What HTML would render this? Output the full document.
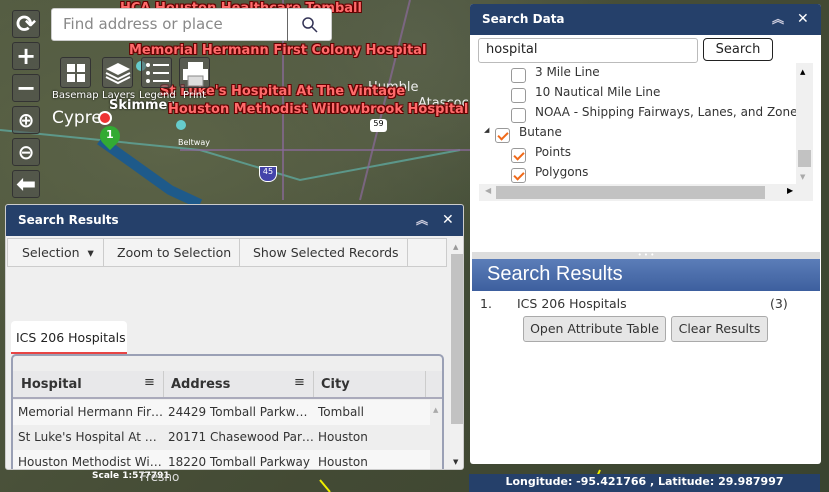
<!DOCTYPE html>
<html><head><meta charset="utf-8"><style>
*{box-sizing:border-box;margin:0;padding:0}
body{width:829px;height:492px;overflow:hidden;position:relative;font-family:"DejaVu Sans","Liberation Sans",sans-serif;background:#4b5238}
.map{position:absolute;inset:0;background:
radial-gradient(ellipse at 20% 30%,#5c6448 0,transparent 40%),
radial-gradient(ellipse at 70% 60%,#3f4a35 0,transparent 45%),
radial-gradient(ellipse at 50% 10%,#58604a 0,transparent 35%),
linear-gradient(135deg,#545c42,#434a34 60%,#3a4430)}
.abs{position:absolute}
.tb{position:absolute;left:12px;width:28px;height:28px;background:rgba(80,80,80,.55);border:1px solid #333;border-radius:3px;color:#fff;font-size:24px;font-weight:bold;text-align:center;line-height:26px}
.lbl{position:absolute;color:#ff6b6b;font-weight:bold;font-size:13px;font-family:"DejaVu Sans",sans-serif;text-shadow:1px 1px 0 #600,-1px -1px 0 #600,1px -1px 0 #600,-1px 1px 0 #600;white-space:nowrap}
.wid{position:absolute;top:57px;width:31px;height:31px;background:rgba(90,90,90,.6);border:1px solid #333;border-radius:3px}
.wl{position:absolute;top:90px;color:#fff;font-size:10px;text-shadow:0 0 2px #000}
.hdr{background:#25406a;color:#fff;font-weight:bold;font-size:12px;height:31px;line-height:31px;padding-left:12px;position:relative}
.hdr .ic{position:absolute;top:0;font-size:12px;color:#ccd}
.cb{position:absolute;width:15px;height:15px;border:1px solid #999;border-radius:3px;background:#fff}
.cb.on::after{content:"";position:absolute;left:4px;top:1px;width:4px;height:8px;border:solid #f06a1a;border-width:0 2px 2px 0;transform:rotate(45deg)}
.tt{position:absolute;font-size:12px;color:#333}
.btn{position:absolute;background:#e6e6e6;border:1px solid #aaa;border-radius:3px;font-size:12.5px;color:#333;text-align:center}
</style></head><body>
<div class="map"></div>
<svg class="abs" style="left:0;top:0" width="829" height="492">
<path d="M0 130 L200 150 L300 180 L460 150" stroke="#5fb0a8" stroke-width="2" fill="none" opacity=".7"/>
<path d="M180 150 L380 150 L470 150" stroke="#8a6a9a" stroke-width="2" fill="none" opacity=".7"/>
<path d="M283 0 L283 200" stroke="#8a6a9a" stroke-width="2" fill="none" opacity=".7"/>
<path d="M410 0 L360 200" stroke="#8a6a9a" stroke-width="2" fill="none" opacity=".7"/>
<path d="M100 140 L170 190 L200 204" stroke="#1e5a8a" stroke-width="10" fill="none"/>
<circle cx="181" cy="125" r="5" fill="#6cc"/>
<circle cx="141" cy="66" r="5" fill="#6cc"/>
<path d="M320 480 L330 492 M600 470 L590 492" stroke="#ee0" stroke-width="2"/>
</svg>
<div class="abs" style="left:52px;top:108px;color:#fff;font-size:17px">Cypre</div>
<div class="abs" style="left:109px;top:98px;color:#fff;font-size:13px;font-weight:bold;text-shadow:0 0 2px #000">Skimmer</div>
<div class="abs" style="left:98px;top:111px;width:14px;height:14px;border-radius:50%;background:#e33;border:2px solid #fff"></div>
<div class="abs" style="left:100px;top:126px;width:20px;height:20px;border-radius:50% 50% 50% 0;transform:rotate(-45deg);background:#3a3;color:#fff"></div>
<div class="abs" style="left:106px;top:128px;color:#fff;font-size:11px;font-weight:bold">1</div>
<div class="abs" style="left:178px;top:138px;color:#fff;font-size:8px">Beltway</div>
<div class="abs" style="left:259px;top:166px;width:18px;height:16px;background:#44a;border:1px solid #fff;border-radius:0 0 8px 8px;color:#fff;font-size:8px;text-align:center">45</div>
<div class="abs" style="left:370px;top:119px;width:17px;height:13px;background:#fff;border-radius:3px;color:#000;font-size:8px;text-align:center">59</div>
<div class="abs" style="left:368px;top:80px;color:#eee;font-size:13px">Humble</div>
<div class="abs" style="left:418px;top:96px;color:#eee;font-size:13px">Atascoc</div>
<div class="lbl" style="left:120px;top:1px">HCA Houston Healthcare Tomball</div>
<div class="lbl" style="left:129px;top:43px">Memorial Hermann First Colony Hospital</div>
<div class="lbl" style="left:160px;top:84px">St Luke's Hospital At The Vintage</div>
<div class="lbl" style="left:168px;top:102px">Houston Methodist Willowbrook Hospital</div>

<div class="tb" style="top:10px">⟳</div>
<div class="tb" style="top:42px">+</div>
<div class="tb" style="top:74px">−</div>
<div class="tb" style="top:106px;font-size:20px">⊕</div>
<div class="tb" style="top:138px;font-size:20px">⊖</div>
<div class="tb" style="top:170px">⬅</div>

<div class="abs" style="left:51px;top:8px;width:281px;height:33px;background:#fff;border-radius:3px;border:1px solid #ccc"></div>
<div class="abs" style="left:63px;top:15px;font-size:15px;color:#888">Find address or place</div>
<div class="abs" style="left:287px;top:8px;width:1px;height:33px;background:#666"></div>
<svg class="abs" style="left:301px;top:16px" width="18" height="18"><circle cx="7" cy="7" r="5" stroke="#335" stroke-width="1.5" fill="none"/><path d="M11 11 L16 16" stroke="#335" stroke-width="1.5"/></svg>

<div class="wid" style="left:60px"><div class="abs" style="left:6px;top:6px;width:8px;height:8px;background:#fff"></div><div class="abs" style="left:16px;top:6px;width:8px;height:8px;background:#fff"></div><div class="abs" style="left:6px;top:16px;width:8px;height:8px;background:#fff"></div><div class="abs" style="left:16px;top:16px;width:8px;height:8px;background:#fff"></div></div>
<div class="wid" style="left:102px"><svg width="31" height="31"><path d="M15 5 L27 11 L15 17 L3 11Z" fill="#fff"/><path d="M3 15 L15 21 L27 15 M3 19 L15 25 L27 19" stroke="#fff" stroke-width="2" fill="none"/></svg></div>
<div class="wid" style="left:141px"><svg width="31" height="31"><g fill="#fff"><circle cx="6" cy="7" r="2"/><circle cx="6" cy="15" r="2"/><circle cx="6" cy="23" r="2"/><rect x="11" y="6" width="16" height="2"/><rect x="11" y="14" width="16" height="2"/><rect x="11" y="22" width="16" height="2"/></g></svg></div>
<div class="wid" style="left:179px"><svg width="31" height="31"><rect x="8" y="4" width="15" height="7" fill="#fff"/><rect x="3" y="11" width="25" height="11" fill="#fff"/><rect x="8" y="18" width="15" height="10" fill="#ddd" stroke="#888"/></svg></div>
<div class="wl" style="left:52px">Basemap</div><div class="wl" style="left:102px">Layers</div><div class="wl" style="left:139px">Legend</div><div class="wl" style="left:183px">Print</div>

<div class="abs" style="left:92px;top:471px;color:#fff;font-size:9px;font-weight:bold">Scale 1:577791</div>
<div class="abs" style="left:140px;top:470px;color:#ddd;font-size:12px">Fresno</div>

<div class="abs" style="left:5px;top:204px;width:459px;height:266px;background:#efefef;border:1px solid #ccc;border-radius:3px;overflow:hidden">
<div class="hdr">Search Results<span class="ic" style="left:410px">︽</span><span class="ic" style="left:436px;font-size:14px;color:#fff">✕</span></div>
<div class="abs" style="left:1px;top:33px;width:440px;height:29px;background:#f3f3f3;border:1px solid #ccc;font-size:12.5px;color:#333">
<span class="abs" style="left:14px;top:6px">Selection &nbsp;▾</span>
<span class="abs" style="left:95px;top:0;width:1px;height:28px;background:#ccc"></span>
<span class="abs" style="left:109px;top:6px">Zoom to Selection</span>
<span class="abs" style="left:231px;top:0;width:1px;height:28px;background:#ccc"></span>
<span class="abs" style="left:245px;top:6px">Show Selected Records</span>
<span class="abs" style="left:399px;top:0;width:1px;height:28px;background:#ccc"></span>
</div>
<div class="abs" style="left:444px;top:33px;width:14px;height:232px;background:#f0f0f0"><div class="abs" style="left:1px;top:16px;width:12px;height:170px;background:#c2c2c2"></div><div class="abs" style="left:3px;top:5px;font-size:7px;color:#999">▲</div><div class="abs" style="left:3px;top:220px;font-size:7px;color:#333">▼</div></div>
<div class="abs" style="left:5px;top:116px;width:116px;height:33px;background:#fff;border-radius:4px 4px 0 0;border-bottom:2px solid #e84545;font-size:12.5px;color:#222;padding:9px 0 0 5px">ICS 206 Hospitals</div>
<div class="abs" style="left:5px;top:149px;width:433px;height:120px;border:2px solid #9aa0b5;border-radius:5px;background:#eee"></div>
<div class="abs" style="left:7px;top:166px;width:429px;height:28px;background:#e8e8ea;border-bottom:2px solid #aab;font-size:13px;font-weight:bold;color:#333">
<span class="abs" style="left:8px;top:6px">Hospital</span><span class="abs" style="left:131px;top:4px;font-weight:normal">≡</span>
<span class="abs" style="left:150px;top:0;width:1px;height:26px;background:#ccc"></span>
<span class="abs" style="left:158px;top:6px">Address</span><span class="abs" style="left:281px;top:4px;font-weight:normal">≡</span>
<span class="abs" style="left:300px;top:0;width:1px;height:26px;background:#ccc"></span>
<span class="abs" style="left:308px;top:6px">City</span>
<span class="abs" style="left:412px;top:0;width:1px;height:26px;background:#ccc"></span>
</div>
<div class="abs" style="left:7px;top:195px;width:417px;height:75px;font-size:12px;color:#333">
<div style="height:25px;background:#f7f7f7;position:relative"><span class="abs" style="left:5px;top:5px">Memorial Hermann Fir…</span><span class="abs" style="left:155px;top:5px">24429 Tomball Parkw…</span><span class="abs" style="left:305px;top:5px">Tomball</span></div>
<div style="height:25px;background:#eeeeee;position:relative"><span class="abs" style="left:5px;top:5px">St Luke's Hospital At …</span><span class="abs" style="left:155px;top:5px">20171 Chasewood Par…</span><span class="abs" style="left:305px;top:5px">Houston</span></div>
<div style="height:25px;background:#f7f7f7;position:relative"><span class="abs" style="left:5px;top:5px">Houston Methodist Wi…</span><span class="abs" style="left:155px;top:5px">18220 Tomball Parkway</span><span class="abs" style="left:305px;top:5px">Houston</span></div>
</div>
<div class="abs" style="left:427px;top:201px;font-size:7px;color:#aaa">▲</div>
</div>

<div class="abs" style="left:470px;top:4px;width:351px;height:460px;background:#fff;border-radius:3px;overflow:hidden">
<div class="hdr">Search Data<span class="ic" style="left:302px">︽</span><span class="ic" style="left:327px;font-size:14px;color:#fff">✕</span></div>
<div class="abs" style="left:8px;top:34px;width:220px;height:25px;border:1px solid #bbb;border-radius:3px;font-size:13px;color:#222;padding:3px 0 0 7px">hospital</div>
<div class="abs" style="left:233px;top:34px;width:70px;height:23px;border:1px solid #222;border-radius:4px;font-size:13px;color:#222;text-align:center;line-height:21px">Search</div>
<div class="cb" style="left:41px;top:64px"></div><div class="tt" style="left:65px;top:61px">3 Mile Line</div>
<div class="cb" style="left:41px;top:84px"></div><div class="tt" style="left:65px;top:81px">10 Nautical Mile Line</div>
<div class="cb" style="left:41px;top:104px"></div><div class="tt" style="left:65px;top:101px;width:262px;overflow:hidden;white-space:nowrap">NOAA - Shipping Fairways, Lanes, and Zones</div>
<div class="abs" style="left:14px;top:122px;font-size:7px;color:#333">◢</div>
<div class="cb on" style="left:25px;top:124px"></div><div class="tt" style="left:49px;top:121px">Butane</div>
<div class="cb on" style="left:41px;top:144px"></div><div class="tt" style="left:65px;top:141px">Points</div>
<div class="cb on" style="left:41px;top:164px"></div><div class="tt" style="left:65px;top:161px">Polygons</div>
<div class="abs" style="left:326px;top:59px;width:17px;height:124px;background:#f0f0f0"><div class="abs" style="left:2px;top:87px;width:13px;height:17px;background:#c2c2c2"></div><div class="abs" style="left:4px;top:5px;font-size:7px">▲</div><div class="abs" style="left:4px;top:110px;font-size:7px;color:#aaa">▼</div></div>
<div class="abs" style="left:9px;top:180px;width:334px;height:17px;background:#f0f0f0"><div class="abs" style="left:17px;top:2px;width:269px;height:13px;background:#c2c2c2"></div><div class="abs" style="left:6px;top:2px;font-size:8px;color:#aaa">◀</div><div class="abs" style="left:308px;top:2px;font-size:8px">▶</div></div>
<div class="abs" style="left:2px;top:248px;width:348px;height:7px;background:#ddd;text-align:center;font-size:7px;line-height:6px;color:#fff">• • •</div>
<div class="abs" style="left:2px;top:255px;width:348px;height:32px;background:linear-gradient(#5b7db8,#3d5f9e);color:#fff;font-size:20px;font-family:'Liberation Sans',sans-serif;padding:4px 0 0 15px">Search Results</div>
<div class="tt" style="left:10px;top:292px;font-size:12.5px">1.</div>
<div class="tt" style="left:47px;top:292px;font-size:12.5px">ICS 206 Hospitals</div>
<div class="tt" style="left:300px;top:292px;font-size:12.5px">(3)</div>
<div class="btn" style="left:53px;top:312px;width:143px;height:26px;line-height:24px">Open Attribute Table</div>
<div class="btn" style="left:201px;top:312px;width:97px;height:26px;line-height:24px">Clear Results</div>
</div>
<div class="abs" style="left:469px;top:474px;width:351px;height:18px;background:#25406a;color:#fff;font-size:11px;font-weight:bold;text-align:center;line-height:16px">Longitude: -95.421766 , Latitude: 29.987997</div>
</body></html>
